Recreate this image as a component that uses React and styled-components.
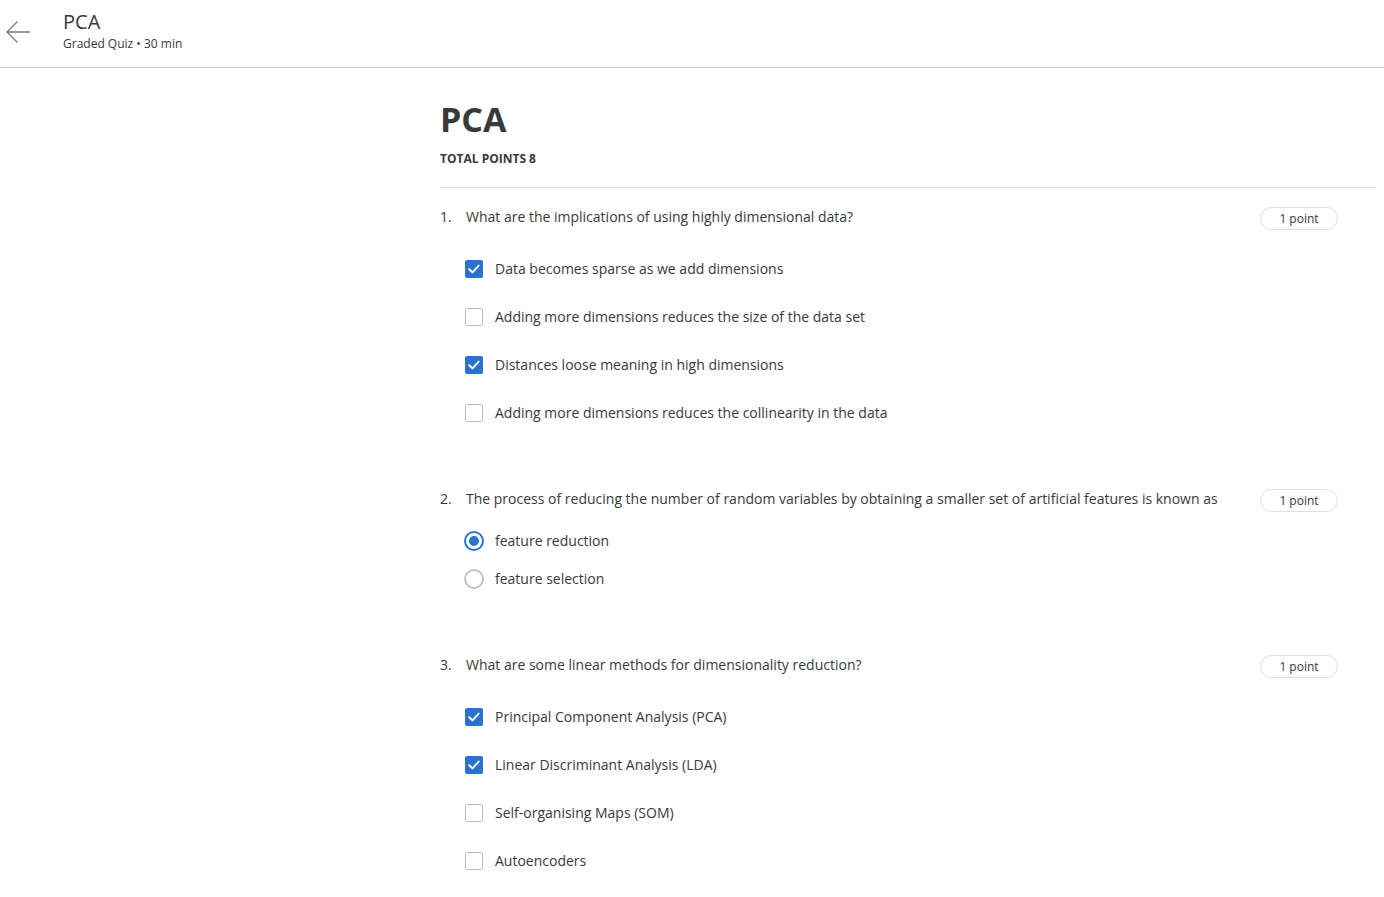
import React from "react";
import styled, { createGlobalStyle } from "styled-components";

const Global = createGlobalStyle`
  html, body { margin: 0; padding: 0; background: #fff; }
  body { font-family: "Open Sans", "Noto Sans", sans-serif; color: #373a3c; }
`;

const Header = styled.header`
  height: 67px;
  border-bottom: 1px solid #c4c4c4;
  display: flex;
  align-items: center;
  box-sizing: content-box;
`;

const BackButton = styled.button`
  width: 63px;
  height: 67px;
  padding: 0 0 0 5px;
  margin: 0;
  border: 0;
  background: none;
  display: flex;
  align-items: center;
  justify-content: flex-start;
  cursor: pointer;
  svg { margin-top: -4px; }
`;

const HeaderText = styled.div`
  display: flex;
  flex-direction: column;
  margin-top: -5px;
`;

const HeaderTitle = styled.div`
  font-size: 20px;
  line-height: 24px;
  color: #373a3c;
`;

const HeaderSub = styled.div`
  margin-top: 2px;
  font-size: 12px;
  line-height: 16px;
  color: #373a3c;
`;

const Main = styled.main`
  padding: 0 8px 40px 440px;
`;

const Title = styled.h1`
  margin: 27px 0 0;
  font-size: 34px;
  line-height: 48px;
  font-weight: 700;
  color: #373a3c;
`;

const TotalPoints = styled.div`
  margin-top: 8px;
  font-size: 12px;
  line-height: 16px;
  font-weight: 700;
  padding-bottom: 20px;
  border-bottom: 1px solid #dcdcdc;
`;

const Questions = styled.div`
  padding-top: 19px;
`;

const Question = styled.section`
  margin-bottom: 52px;
`;

const QuestionRow = styled.div`
  display: flex;
  align-items: flex-start;
  padding-right: 38px;
`;

const Number = styled.span`
  width: 26px;
  flex: none;
  font-size: 14px;
  line-height: 20px;
`;

const Prompt = styled.div`
  flex: 1;
  font-size: 14px;
  line-height: 20px;
`;

const Badge = styled.span`
  flex: none;
  margin-left: 20px;
  width: 76px;
  height: 21px;
  border: 1px solid #dedede;
  border-radius: 12px;
  font-size: 12px;
  line-height: 21px;
  text-align: center;
  color: #373a3c;
`;

const Options = styled.div`
  margin-top: ${p => (p.$radio ? "10px" : "15px")};
  padding-bottom: ${p => (p.$radio ? "5px" : "0")};
`;

const OptionRow = styled.label`
  display: flex;
  align-items: center;
  height: ${p => (p.$radio ? "38px" : "48px")};
  padding-left: ${p => (p.$radio ? "24px" : "25px")};
  font-size: 14px;
  line-height: 20px;
  cursor: pointer;
`;

const Box = styled.span`
  width: 18px;
  height: 18px;
  box-sizing: border-box;
  border-radius: 2px;
  flex: none;
  margin-right: 12px;
  display: flex;
  align-items: center;
  justify-content: center;
  background: ${p => (p.$checked ? "#2a73cc" : "#fff")};
  border: ${p => (p.$checked ? "none" : "1.5px solid #bdbdbd")};
`;

const Radio = styled.span`
  width: 20px;
  height: 20px;
  box-sizing: border-box;
  border-radius: 50%;
  flex: none;
  margin-right: 11px;
  display: flex;
  align-items: center;
  justify-content: center;
  border: 2px solid ${p => (p.$checked ? "#2a73cc" : "#c4c4c4")};
  &::after {
    content: "";
    display: ${p => (p.$checked ? "block" : "none")};
    width: 10px;
    height: 10px;
    border-radius: 50%;
    background: #2a73cc;
  }
`;

const Check = () => (
  <svg width="14" height="14" viewBox="0 0 14 14">
    <path d="M2.2 7.2 L5.5 10.4 L11.8 3.6" fill="none" stroke="#fff" strokeWidth="1.9" strokeLinecap="round" strokeLinejoin="round" />
  </svg>
);

const questions = [
  {
    prompt: "What are the implications of using highly dimensional data?",
    type: "check",
    options: [
      ["Data becomes sparse as we add dimensions", true],
      ["Adding more dimensions reduces the size of the data set", false],
      ["Distances loose meaning in high dimensions", true],
      ["Adding more dimensions reduces the collinearity in the data", false],
    ],
  },
  {
    prompt:
      "The process of reducing the number of random variables by obtaining a smaller set of artificial features is known as",
    type: "radio",
    options: [
      ["feature reduction", true],
      ["feature selection", false],
    ],
  },
  {
    prompt: "What are some linear methods for dimensionality reduction?",
    type: "check",
    options: [
      ["Principal Component Analysis (PCA)", true],
      ["Linear Discriminant Analysis (LDA)", true],
      ["Self-organising Maps (SOM)", false],
      ["Autoencoders", false],
    ],
  },
];

export default function App() {
  return (
    <>
      <Global />
      <Header>
        <BackButton aria-label="Back">
          <svg width="26" height="24" viewBox="0 0 26 24">
            <path d="M25 12 H2 M12.5 1.5 L2 12 L12.5 22.5" fill="none" stroke="#7a7a7a" strokeWidth="1.3" />
          </svg>
        </BackButton>
        <HeaderText>
          <HeaderTitle>PCA</HeaderTitle>
          <HeaderSub>Graded Quiz • 30 min</HeaderSub>
        </HeaderText>
      </Header>
      <Main>
        <Title>PCA</Title>
        <TotalPoints>TOTAL POINTS 8</TotalPoints>
        <Questions>
          {questions.map((q, i) => {
            const radio = q.type === "radio";
            return (
              <Question key={i}>
                <QuestionRow>
                  <Number>{i + 1}.</Number>
                  <Prompt>{q.prompt}</Prompt>
                  <Badge>1 point</Badge>
                </QuestionRow>
                <Options $radio={radio}>
                  {q.options.map(([label, checked], j) => (
                    <OptionRow key={j} $radio={radio}>
                      {radio ? (
                        <Radio $checked={checked} />
                      ) : (
                        <Box $checked={checked}>{checked && <Check />}</Box>
                      )}
                      {label}
                    </OptionRow>
                  ))}
                </Options>
              </Question>
            );
          })}
        </Questions>
      </Main>
    </>
  );
}
